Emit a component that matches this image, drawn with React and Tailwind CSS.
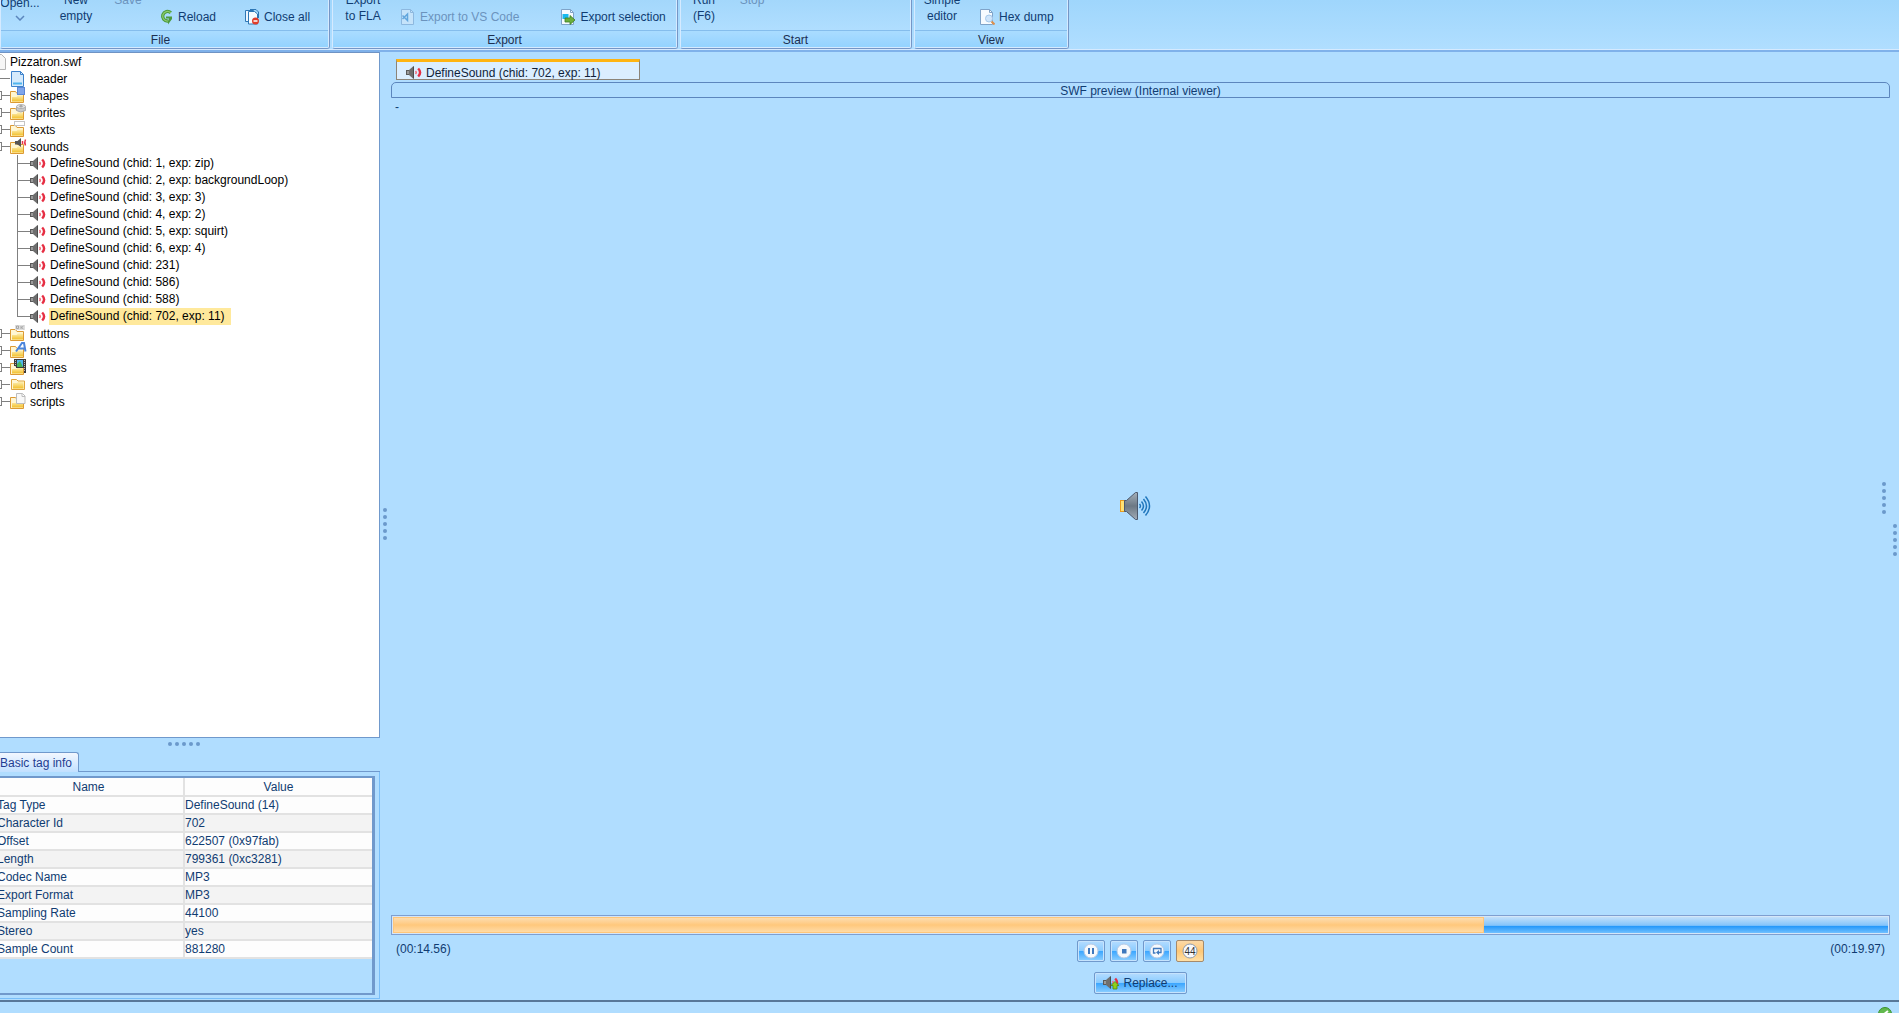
const dots = [0, 1, 2, 3, 4];

function Dots({ vertical, className }) {
  return (
    <div className={`flex gap-[3px] ${vertical ? "flex-col" : ""} ${className}`}>
      {dots.map((d) => (
        <span key={d} className="size-1 rounded-full bg-[#6b99cb]" />
      ))}
    </div>
  );
}

function SmallSpeaker({ badge }) {
  return (
    <svg width="16" height="14" viewBox="0 0 16 14" className="shrink-0">
      <path d="M0 4h3v5H0z" fill="#5a5a5a" />
      <path d="M1 5h2v3H1z" fill="#9a9a9a" />
      <path d="M3 4L7 .5h1v12H7L3 9z" fill="#6e6e6e" />
      <path d="M7.500 .5v12" stroke="#4c4c4c" />
      <path d="M9.500 5q1.500 1.500 0 3" fill="none" stroke="#f0727f" strokeWidth="1.500" />
      <path d="M12.200 2.500q3.800 4 0 8" fill="none" stroke="#e62e43" strokeWidth="2.400" />
      {badge && <path d="M12 5.500l4 4h-2v3.500h-4V9.500H8z" fill="#8fcf1c" stroke="#4f8a10" strokeWidth=".8" />}
    </svg>
  );
}

function FolderIcon({ kind }) {
  return (
    <svg width="17" height="17" viewBox="0 0 17 17" className="shrink-0">
      <defs>
        <linearGradient id="folder" x1="0" y1="0" x2="0" y2="1">
          <stop offset="0" stopColor="#fdeeb0" />
          <stop offset="1" stopColor="#f2c02c" />
        </linearGradient>
      </defs>
      {kind === "others" ? (
        <g>
          <path d="M1.500 13.500v-10h5l1.500 1.500h6.500v8.500z" fill="#fff6d2" stroke="#dfa53c" />
          <path d="M3 12.500V7h4l1-1h5.500v6.500z" fill="url(#folder)" />
        </g>
      ) : (
        <g>
          <path d="M.5 15.500v-11h5l1.500 2h6.500v9z" fill="#fff6d2" stroke="#dc9a34" />
          <path d="M2 14.500V10h4.500L8 8.500h5v6z" fill="url(#folder)" />
        </g>
      )}
      {kind === "shapes" && <rect x="7.500" y=".5" width="7" height="7" fill="#7fa5ea" stroke="#5a86d6" />}
      {kind === "sprites" && (
        <g fill="#c9c9c9" stroke="#999" strokeWidth=".7">
          <path d="M6.500 3v3.500q4 3 9 0V3z" />
          <ellipse cx="11" cy="2.500" rx="4.500" ry="2" fill="#e6e6e6" />
          <ellipse cx="11" cy="2.300" rx="1.500" ry=".8" fill="#aaa" />
        </g>
      )}
      {kind === "texts" && <rect x="4.500" y=".5" width="10" height="4" fill="#fff" stroke="#c4c4c4" />}
      {kind === "sounds" && (
        <g>
          <path d="M5 3h2.500L11 0v9L7.500 6.500H5z" fill="#555" />
          <path d="M12.500 3v3M15.500 1.500q-1.500 3 0 6" fill="none" stroke="#e8354a" strokeWidth="1.500" />
        </g>
      )}
      {kind === "buttons" && (
        <g>
          <rect x="5" y="0" width="10" height="5" fill="#dedede" />
          <path d="M6.500 1h2v2.500h-2zM11 1v3M13.500 1L11.500 2.500l2 1.500" fill="none" stroke="#999" strokeWidth=".8" />
        </g>
      )}
      {kind === "fonts" && <path d="M6 9.500L12 1h2l1.500 8.500M8.500 6.500h6" fill="none" stroke="#4c86dc" strokeWidth="2" />}
      {kind === "frames" && (
        <g>
          <path d="M4 0h12v14h-2V9H6V7H4z" fill="#3b3b3b" />
          <path d="M7 1h6v7H7z" fill="#4fb7ee" />
          <path d="M7 5l3-3 3 6H7z" fill="#46b45b" />
          <path d="M5.500 1v7M14.500 1v12" stroke="#bbb" strokeDasharray="1 1" />
        </g>
      )}
      {kind === "scripts" && <path d="M6.500 .5h6l2.500 2.500v7.500H6.500z M12 .5V3.500h3" fill="#f8f8f8" stroke="#bcbcbc" />}
    </svg>
  );
}

function PageIcon({ children, stroke = "#7fa3c8", fill = "#f7fbff" }) {
  return (
    <svg width="16" height="16" viewBox="0 0 16 16" className="shrink-0">
      <path d="M1.500 .5h9l3 3v12h-12z" fill={fill} stroke={stroke} />
      <path d="M10.500 .5v3h3" fill="none" stroke={stroke} />
      {children}
    </svg>
  );
}

const sounds = [
  "DefineSound (chid: 1, exp: zip)",
  "DefineSound (chid: 2, exp: backgroundLoop)",
  "DefineSound (chid: 3, exp: 3)",
  "DefineSound (chid: 4, exp: 2)",
  "DefineSound (chid: 5, exp: squirt)",
  "DefineSound (chid: 6, exp: 4)",
  "DefineSound (chid: 231)",
  "DefineSound (chid: 586)",
  "DefineSound (chid: 588)",
  "DefineSound (chid: 702, exp: 11)",
];

function FolderRow({ name }) {
  return (
    <li className="flex h-[17px] items-center">
      <span className="h-[9px] w-[2px] border-y border-r border-[#808080]" />
      <span className="h-px w-2 bg-[#808080]" />
      <FolderIcon kind={name} />
      <span className="ml-[3px]">{name}</span>
    </li>
  );
}

function Tree() {
  return (
    <ul className="min-h-0 flex-1 overflow-hidden border-t border-r border-b border-[#7099cc] border-t-[#6f93c4] bg-white text-black">
      <li className="flex h-[17px] items-center">
        <svg width="6" height="16" viewBox="0 0 6 16">
          <path d="M0 .5h1.500l4 4v11H0" fill="#f6f6f6" stroke="#b5b5b5" />
        </svg>
        <span className="ml-1">Pizzatron.swf</span>
      </li>
      <li className="flex h-[17px] items-center">
        <span className="h-px w-[10px] bg-[#808080]" />
        <PageIcon stroke="#3d82cc" fill="#d5eafc">
          <path d="M3 11.500h9v2H3z" fill="#4fb4ee" />
        </PageIcon>
        <span className="ml-1">header</span>
      </li>
      <FolderRow name="shapes" />
      <FolderRow name="sprites" />
      <FolderRow name="texts" />
      <FolderRow name="sounds" />
      <li>
        <ul>
          {sounds.map((s, i) => {
            const last = i === sounds.length - 1;
            return (
              <li key={s} className="flex h-[17px] items-center pl-[17px]">
                <span className={`w-px self-start bg-[#808080] ${last ? "h-[9px]" : "h-[17px]"}`} />
                <span className="h-px w-3 bg-[#808080]" />
                <SmallSpeaker />
                <span className={`ml-[3px] h-[17px] px-px leading-[17px] ${last ? "bg-[#ffe99c] pr-[6px]" : ""}`}>{s}</span>
              </li>
            );
          })}
        </ul>
      </li>
      <FolderRow name="buttons" />
      <FolderRow name="fonts" />
      <FolderRow name="frames" />
      <FolderRow name="others" />
      <FolderRow name="scripts" />
    </ul>
  );
}

function Group({ title, className, titleClass = "", children }) {
  return (
    <section className={`mr-[2px] flex h-[49px] shrink-0 flex-col rounded-b-[3px] border-r border-b border-l border-[#7596c6] border-l-[#d5eaff] ${className}`}>
      <div className="flex h-full flex-col rounded-b-[2px] border-r border-b border-[#d5eaff]">
        <div className="flex h-[30px] items-end overflow-hidden bg-linear-to-b from-[#a3d7fb] to-[#b0deff]">{children}</div>
        <h2 className={`h-[17px] border-t border-[#85bdec] bg-linear-to-b from-[#aadcff] to-[#94d3ff] text-center leading-[18px] text-[#1c2f50] ${titleClass}`}>{title}</h2>
      </div>
    </section>
  );
}

function BigButton({ className, children }) {
  return <button className={`flex h-[30px] shrink-0 flex-col items-center justify-end leading-4 ${className}`}>{children}</button>;
}

function ToolButton({ className = "", children }) {
  return <button className={`mb-[3px] flex h-5 shrink-0 items-center gap-1 whitespace-nowrap ${className}`}>{children}</button>;
}

function Ribbon() {
  return (
    <header className="h-[52px] shrink-0 border-b-2 border-[#7fb1ea]">
      <div className="flex h-[50px] items-start overflow-hidden border-b border-[#d5eaff] bg-linear-to-b from-[#9fd6fc] to-[#b0deff]">
        <Group title="File" className="w-[330px]" titleClass="pr-2">
          <BigButton className="w-[38px] pb-[9px]">
            <span className="shrink-0">Open...</span>
            <svg width="10" height="6" viewBox="0 0 10 6" className="mt-1 shrink-0">
              <path d="M1 1l4 4 4-4" fill="none" stroke="#5b86bd" strokeWidth="1.500" />
            </svg>
          </BigButton>
          <BigButton className="w-[74px] pb-[6px]">
            <span>New</span>
            <span>empty</span>
          </BigButton>
          <BigButton className="w-[30px] pb-[22px] text-[#6b93bd]">
            <span>Save</span>
          </BigButton>
          <ToolButton className="ml-[17px]">
            <svg width="14" height="16" viewBox="0 0 14 16">
              <path d="M10.800 3.800A4.800 4.800 0 1 0 8 12" fill="none" stroke="#4d9a3d" strokeWidth="3.400" />
              <path d="M10.800 3.800A4.800 4.800 0 1 0 8 12" fill="none" stroke="#8ccc6c" strokeWidth="1.200" />
              <path d="M6 7.500h6V10L8 15.500V12l1-2.500H6z" fill="#4d9a3d" />
            </svg>
            Reload
          </ToolButton>
          <ToolButton className="ml-7">
            <svg width="16" height="16" viewBox="0 0 16 16">
              <path d="M1.500 1.500h8v11h-8z" fill="#eef6ff" stroke="#2e77b5" />
              <path d="M4.500 2.500h6l3 2.500v10h-9z" fill="#f7fbff" stroke="#2e77b5" />
              <path d="M6 .5h6l2.500 2.500v6" fill="none" stroke="#2e77b5" />
              <circle cx="11.500" cy="12" r="3.500" fill="#e03c2a" />
              <path d="M9.500 12h4" stroke="#fff" strokeWidth="1.500" />
            </svg>
            Close all
          </ToolButton>
        </Group>
        <Group title="Export" className="w-[346px]">
          <BigButton className="ml-2 w-[44px] pb-[6px]">
            <span>Export</span>
            <span>to FLA</span>
          </BigButton>
          <ToolButton className="ml-[15px] text-[#6b93bd]">
            <PageIcon stroke="#8db8df" fill="#c5e3fa">
              <path d="M2.500 6.500l5 5V5l-5 5" fill="none" stroke="#62a6dd" strokeWidth="1.500" />
            </PageIcon>
            Export to VS Code
          </ToolButton>
          <ToolButton className="ml-[41px]">
            <PageIcon>
              <path d="M2.500 5h6v5h-6z" fill="#18b9ee" />
              <path d="M5 9h5V6.500l5 4.500-5 4.500V13H5z" fill="#6caf3c" stroke="#3d7d23" strokeWidth=".8" />
            </PageIcon>
            Export selection
          </ToolButton>
        </Group>
        <Group title="Start" className="w-[232px]">
          <BigButton className="ml-[6px] w-[34px] pb-[6px]">
            <span>Run</span>
            <span>(F6)</span>
          </BigButton>
          <BigButton className="ml-4 w-[30px] pb-[22px] text-[#6b93bd]">
            <span>Stop</span>
          </BigButton>
        </Group>
        <Group title="View" className="w-[155px]">
          <BigButton className="ml-[6px] w-[42px] pb-[6px]">
            <span>Simple</span>
            <span>editor</span>
          </BigButton>
          <ToolButton className="ml-4">
            <PageIcon>
              <circle cx="10" cy="9.500" r="3.500" fill="#cfe5fb" stroke="#a5c8ea" />
              <path d="M12.500 12.500l3 3" stroke="#dc8f4c" strokeWidth="2" />
            </PageIcon>
            Hex dump
          </ToolButton>
        </Group>
      </div>
    </header>
  );
}

const info = [
  ["Tag Type", "DefineSound (14)"],
  ["Character Id", "702"],
  ["Offset", "622507 (0x97fab)"],
  ["Length", "799361 (0xc3281)"],
  ["Codec Name", "MP3"],
  ["Export Format", "MP3"],
  ["Sampling Rate", "44100"],
  ["Stereo", "yes"],
  ["Sample Count", "881280"],
];

function TagInfo() {
  return (
    <section className="shrink-0">
      <div className="flex h-5 items-end">
        <button className="h-5 w-[79px] rounded-tr-[3px] border-t border-r border-[#7099cc] bg-linear-to-b from-[#f2f7ff] to-[#c2e0ff] text-left leading-5 whitespace-nowrap text-[#1f3d91]">
          Basic tag info
        </button>
        <span className="h-px flex-1 bg-[#7099cc]" />
      </div>
      <div className="h-[227px] border-r border-b border-[#78bdf8] pt-1 pr-1 pb-[3px]">
        <div className="h-full border-y-2 border-r-3 border-[#7099cc]">
          <table className="w-full table-fixed border-collapse text-[#103c72]">
            <thead>
              <tr className="h-[18px] border-b-2 border-[#e2e2e2] bg-[#fdfdfd]">
                <th className="w-[184px] border-r-2 border-[#e2e2e2] p-0 pr-[6px] leading-4 font-normal">Name</th>
                <th className="p-0 leading-4 font-normal">Value</th>
              </tr>
            </thead>
            <tbody>
              {info.map(([k, v], i) => (
                <tr key={k} className={`h-[18px] border-b-2 border-[#e2e2e2] ${i % 2 ? "bg-[#f3f3f3]" : "bg-[#fdfdfd]"}`}>
                  <td className="border-r-2 border-[#e2e2e2] p-0 leading-4">
                    <span className="-ml-[3px] block">{k}</span>
                  </td>
                  <td className="p-0 leading-4">{v}</td>
                </tr>
              ))}
            </tbody>
          </table>
        </div>
      </div>
    </section>
  );
}

function MediaButton({ label, active, children }) {
  return (
    <button
      aria-label={label}
      className={`flex h-[22px] w-7 items-center justify-center rounded-[2px] border ${
        active
          ? "border-[#a58a6b] bg-linear-to-b from-[#fbd9a8] via-[#ffc875] to-[#ffe0a6]"
          : "border-[#7099cc] bg-[linear-gradient(#b5dcff_0%,#8accff_48%,#39a5ff_50%,#90d0ff_100%)] inset-ring inset-ring-[#c6e3fd]"
      }`}
    >
      <svg width="16" height="16" viewBox="0 0 16 16">
        <circle cx="8" cy="8" r="7" fill="#f7f9fc" stroke={active ? "#8f9bab" : "#b5c9e4"} />
        {children}
      </svg>
    </button>
  );
}

function Viewer() {
  return (
    <main className="flex min-w-0 flex-1 flex-col pr-[9px]">
      <div className="mt-[7px] ml-[5px] flex h-[21px] w-[244px] items-center gap-1 border border-t-3 border-[#8c8478] border-t-[#ffb412] bg-[#dbeeff] pt-1 pl-[9px] text-[#101f3a]">
        <SmallSpeaker />
        <span className="leading-4">DefineSound (chid: 702, exp: 11)</span>
      </div>
      <h1 className="mt-[2px] h-4 rounded-t-[5px] border border-[#5c86bd] text-center leading-4">SWF preview (Internal viewer)</h1>
      <div className="relative flex flex-1 flex-col">
        <span className="pl-1 leading-[18px]">-</span>
        <div className="flex flex-1 items-center justify-center pb-5">
          <svg width="32" height="32" viewBox="0 0 32 32" className="mr-3">
            <defs>
              <linearGradient id="cone" x1="0" y1="0" x2="0" y2="1">
                <stop offset="0" stopColor="#a4afb9" />
                <stop offset=".5" stopColor="#6c7884" />
                <stop offset="1" stopColor="#a1abb6" />
              </linearGradient>
            </defs>
            <rect x="1.500" y="10.500" width="5" height="11" fill="#ffe274" stroke="#e89b1f" />
            <path d="M5.500 10.500h2L16.500 2.500h2v27h-2L7.500 21.500h-2z" fill="url(#cone)" stroke="#4c596e" />
            <path d="M20.500 14q2 2 0 4M22.500 11.500q4 4.500 0 9M24.500 9q6 7 0 14M26.500 6.500q8 9.500 0 19" fill="none" stroke="#2177bd" strokeWidth="1.500" />
          </svg>
        </div>
        <Dots vertical className="absolute top-[384px] right-1" />
      </div>
      <div role="progressbar" aria-label="Playback position" aria-valuenow={73} className="h-5 border border-[#7f9fd0] bg-[linear-gradient(#c9e3fa_0%,#83c4fb_52%,#2699fb_58%,#7cc6ff_100%)] p-px inset-ring inset-ring-[#d5e6f8]">
        <div className="h-full border border-[#ffc67a] bg-linear-to-b from-[#fddcae] via-[#ffc87c] to-[#ffdba6]" style={{ width: "73%" }} />
      </div>
      <div className="grid h-[65px] grid-cols-[1fr_auto_1fr] items-start px-[5px] pt-[5px]">
        <span className="leading-[18px]">(00:14.56)</span>
        <div className="flex flex-col items-center gap-[10px]">
          <div className="flex gap-[5px]">
            <MediaButton label="Pause">
              <path d="M6 5v6M10 5v6" stroke="#3f78bd" strokeWidth="2" />
            </MediaButton>
            <MediaButton label="Stop">
              <path d="M6 6h4.500v4.500H6z" fill="#3f78bd" />
            </MediaButton>
            <MediaButton label="Loop">
              <path d="M6.500 10H4.500V5.500h7.500V9.500H9" fill="none" stroke="#3f78bd" strokeWidth="1.300" />
              <path d="M10 7v5L7 9.500z" fill="#3f78bd" />
            </MediaButton>
            <MediaButton label="44 kHz" active>
              <text x="8" y="11.500" textAnchor="middle" fontSize="10" fill="#333">44</text>
            </MediaButton>
          </div>
          <button className="flex h-[22px] w-[93px] items-center justify-center gap-1 rounded-[2px] border border-[#7099cc] bg-[linear-gradient(#b5dcff_0%,#8accff_48%,#39a5ff_50%,#90d0ff_100%)] inset-ring inset-ring-[#c6e3fd]">
            <SmallSpeaker badge />
            Replace...
          </button>
        </div>
        <span className="text-right leading-[18px]">(00:19.97)</span>
      </div>
    </main>
  );
}

export default function App() {
  return (
    <div className="flex h-screen flex-col overflow-hidden bg-[#b0ddff] font-['Liberation_Sans',Arial,sans-serif] text-[12px] text-[#103c72]">
      <Ribbon />
      <div className="flex min-h-0 flex-1">
        <aside className="flex w-[380px] shrink-0 flex-col pb-px">
          <Tree />
          <Dots className="justify-center pt-1 pb-[6px] pr-3" />
          <TagInfo />
        </aside>
        <div className="flex w-[11px] items-center justify-center pr-[2px] pb-1">
          <Dots vertical />
        </div>
        <Viewer />
        <Dots vertical className="-ml-[6px] w-[6px] justify-center pt-[27px]" />
      </div>
      <footer className="flex h-[13px] shrink-0 items-start justify-end overflow-hidden border-t-2 border-[#587899] pt-[5px] pr-[7px]">
        <svg width="14" height="14" viewBox="0 0 14 14" className="shrink-0">
          <circle cx="7" cy="7" r="6.500" fill="#62b94e" stroke="#38902e" />
          <path d="M5 8l5-4" stroke="#fff" strokeWidth="2" />
        </svg>
      </footer>
    </div>
  );
}
